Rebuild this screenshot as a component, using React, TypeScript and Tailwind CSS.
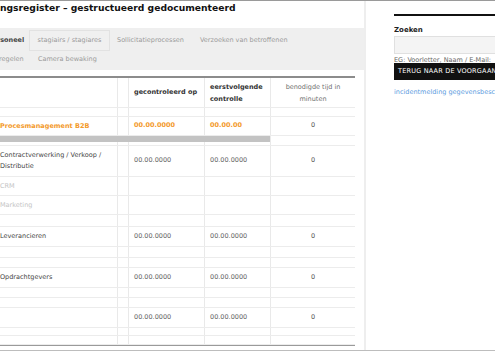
import React from 'react';

type Row = {
  h: string;
  name?: string;
  tone?: 'orange' | 'muted' | 'dark';
  a?: string;
  b?: string;
  min?: string;
  bar?: boolean;
};

const rows: Row[] = [
  { h: 'h-[9px]' },
  { h: 'h-[19px]', name: 'Procesmanagement B2B', tone: 'orange', a: '00.00.0000', b: '00.00.00', min: '0' },
  { h: 'h-[10px]', bar: true },
  { h: 'h-[31px]', name: 'Contractverwerking / Verkoop / Distributie', tone: 'dark', a: '00.00.0000', b: '00.00.0000', min: '0' },
  { h: 'h-[19px]', name: 'CRM', tone: 'muted' },
  { h: 'h-[19px]', name: 'Marketing', tone: 'muted' },
  { h: 'h-[12px]' },
  { h: 'h-[20px]', name: 'Leverancieren', tone: 'dark', a: '00.00.0000', b: '00.00.0000', min: '0' },
  { h: 'h-[11px]' },
  { h: 'h-[10px]' },
  { h: 'h-[20px]', name: 'Opdrachtgevers', tone: 'dark', a: '00.00.0000', b: '00.00.0000', min: '0' },
  { h: 'h-[10px]' },
  { h: 'h-[10px]' },
  { h: 'h-[20px]', a: '00.00.0000', b: '00.00.0000', min: '0' },
  { h: 'h-[8px]' },
  { h: 'h-[9px]' },
];

const cols = 'grid grid-cols-[118px_11px_76px_66px_84px]';
const cell = 'border-r border-[#e9e9e9] flex items-center';

const App: React.FC = () => {
  return (
    <div className="w-[495px] h-[351px] overflow-hidden bg-white border-t border-[#9a9a9a] font-['DejaVu_Sans',sans-serif] text-[#555]">
      <div className="flex h-[349px]">
        {/* hoofdkolom */}
        <div className="w-[364px] shrink-0 flex flex-col">
          <h1 className="h-[27px] pt-[1px] text-[9.2px] leading-[12px] font-bold text-[#111] whitespace-nowrap">
            ngsregister – gestructueerd gedocumenteerd
          </h1>

          <div className="bg-[#efefef] h-[42px] pt-[2px] text-[6.5px] text-[#9a9a9a]">
            <div className="flex items-center h-[21px] whitespace-nowrap">
              <span className="-ml-[3px] w-[32px] font-bold text-[#444]">rsoneel</span>
              <span className="w-[81px] h-[21px] flex items-center justify-center border border-[#e2e2e2] bg-[#f0f0f0]">
                stagiairs / stagiares
              </span>
              <span className="ml-[7px]">Sollicitatieprocessen</span>
              <span className="ml-[16px]">Verzoeken van betroffenen</span>
            </div>
            <div className="flex items-center h-[17px] whitespace-nowrap">
              <span className="-ml-[1px] w-[39px]">regelen</span>
              <span>Camera bewaking</span>
            </div>
          </div>

          <div className="mt-[6px] w-[355px] border-t-2 border-[#8c8c8c] text-[6.5px]">
            <div className={`${cols} h-[30px] border-b border-[#ececec] font-bold text-[#333]`}>
              <div className={cell}></div>
              <div className={cell}></div>
              <div className={`${cell} pl-[5px]`}>gecontroleerd op</div>
              <div className={`${cell} pl-[5px] leading-[12px]`}>eerstvolgende<br />controlle</div>
              <div className="flex items-center justify-center text-center font-normal text-[#6f6f6f] leading-[12px]">
                benodigde tijd in<br />minuten
              </div>
            </div>

            {rows.map((r, i) => (
              <div key={i} className={`${cols} ${r.h} border-b border-[#ececec] relative`}>
                {r.bar && <div className="absolute left-0 top-0 w-[270px] h-[6px] bg-[#c3c3c3]" />}
                <div
                  className={`${cell} leading-[11px] ${
                    r.tone === 'orange'
                      ? 'font-bold text-[#f39a2b]'
                      : r.tone === 'muted'
                      ? 'text-[#c4c4c4]'
                      : 'text-[#444]'
                  }`}
                >
                  {r.name}
                </div>
                <div className={cell}></div>
                <div className={`${cell} pl-[5px] ${r.tone === 'orange' ? 'font-bold text-[#f39a2b]' : 'text-[#666]'}`}>{r.a}</div>
                <div className={`${cell} pl-[5px] ${r.tone === 'orange' ? 'font-bold text-[#f39a2b]' : 'text-[#666]'}`}>{r.b}</div>
                <div className="flex items-center justify-center text-[#555]">{r.min}</div>
              </div>
            ))}
            <div className="border-b border-[#9a9a9a]"></div>
          </div>
        </div>

        <div className="w-[2px] bg-[#eeeeee] shrink-0"></div>

        {/* zijbalk */}
        <aside className="ml-[28px] flex-1 min-w-0 overflow-hidden whitespace-nowrap">
          <div className="mt-[13px] h-[2px] bg-[#111]"></div>
          <div className="mt-[10px] text-[7px] leading-[9px] font-bold text-[#222]">Zoeken</div>
          <div className="mt-[1px] h-[18px] w-[120px] bg-[#f4f4f4] border border-[#e0e0e0]"></div>
          <div className="mt-[2px] h-[7px] overflow-hidden text-[6.5px] leading-[9px] text-[#666]">
            EG: Voorletter, Naam / E-Mail:
          </div>
          <div className="h-[17px] w-[120px] bg-[#111] text-white text-[6.5px] tracking-[0.2px] flex items-center pl-[4px]">
            TERUG NAAR DE VOORGAANDE PAGINA
          </div>
          <div className="mt-[8px] text-[6.5px] text-[#5b9be0]">incidentmelding gegevensbescherming</div>
        </aside>
      </div>
      <div className="h-[2px] bg-[#bdbdbd]"></div>
    </div>
  );
};

export default App;
